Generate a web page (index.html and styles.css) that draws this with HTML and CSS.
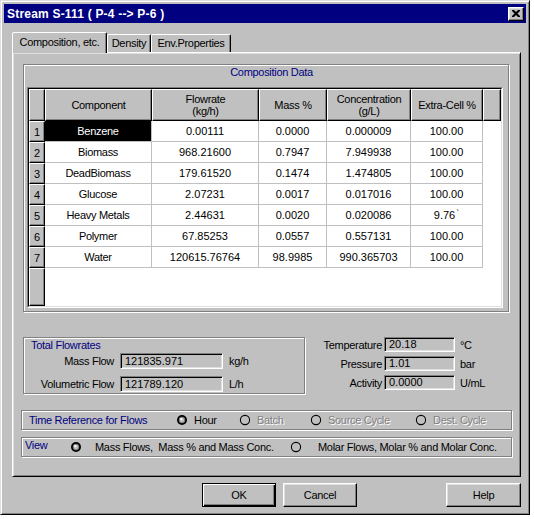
FILE: index.html
```html
<!DOCTYPE html>
<html>
<head>
<meta charset="utf-8">
<link rel="stylesheet" href="styles.css">
</head>
<body>
<div class="window">
  <div class="titlebar">
    <span class="title">Stream S-111 ( P-4 --&gt; P-6 )</span>
    <span class="close"><svg width="8" height="7" viewBox="0 0 8 7"><path d="M0 0h2l2 2 2-2h2v1l-2.5 2.5L8 6v1H6L4 5 2 7H0V6l2.5-2.5L0 1z" fill="#000"/></svg></span>
  </div>
  <div class="dlg">
    <div class="tabs">
      <div class="tab active">Composition, etc.</div>
      <div class="tab t-density">Density</div>
      <div class="tab t-env">Env.Properties</div>
    </div>
    <div class="panel">
      <div class="group comp">
        <div class="comp-title">Composition Data</div>
        <div class="grid-outer">
          <div class="grid">
            <div class="hc"></div>
            <div class="hc">Component</div>
            <div class="hc">Flowrate<br>(kg/h)</div>
            <div class="hc">Mass %</div>
            <div class="hc">Concentration<br>(g/L)</div>
            <div class="hc">Extra-Cell %</div>
            <div class="hc"></div>

            <div class="rh">1</div><div class="dc sel">Benzene</div><div class="dc">0.00111</div><div class="dc">0.0000</div><div class="dc">0.000009</div><div class="dc">100.00</div><div class="bl"></div>
            <div class="rh">2</div><div class="dc">Biomass</div><div class="dc">968.21600</div><div class="dc">0.7947</div><div class="dc">7.949938</div><div class="dc">100.00</div><div class="bl"></div>
            <div class="rh">3</div><div class="dc">DeadBiomass</div><div class="dc">179.61520</div><div class="dc">0.1474</div><div class="dc">1.474805</div><div class="dc">100.00</div><div class="bl"></div>
            <div class="rh">4</div><div class="dc">Glucose</div><div class="dc">2.07231</div><div class="dc">0.0017</div><div class="dc">0.017016</div><div class="dc">100.00</div><div class="bl"></div>
            <div class="rh">5</div><div class="dc">Heavy Metals</div><div class="dc">2.44631</div><div class="dc">0.0020</div><div class="dc">0.020086</div><div class="dc">9.76<span class="tick">`</span></div><div class="bl"></div>
            <div class="rh">6</div><div class="dc">Polymer</div><div class="dc">67.85253</div><div class="dc">0.0557</div><div class="dc">0.557131</div><div class="dc">100.00</div><div class="bl"></div>
            <div class="rh">7</div><div class="dc">Water</div><div class="dc">120615.76764</div><div class="dc">98.9985</div><div class="dc">990.365703</div><div class="dc">100.00</div><div class="bl"></div>
            <div class="rh"></div><div class="bl span6"></div>
          </div>
        </div>
      </div>

      <div class="mid">
        <div class="group totals">
          <div class="tot-title">Total Flowrates</div>
          <div class="tot-grid">
            <span class="lbl">Mass Flow</span><div class="field">121835.971</div><span>kg/h</span>
            <span class="lbl">Volumetric Flow</span><div class="field">121789.120</div><span>L/h</span>
          </div>
        </div>
        <div class="props">
          <span class="lbl">Temperature</span><div class="field">20.18</div><span>°C</span>
          <span class="lbl">Pressure</span><div class="field">1.01</div><span>bar</span>
          <span class="lbl">Activity</span><div class="field">0.0000</div><span>U/mL</span>
        </div>
      </div>

      <div class="group timeref">
        <span class="gl">Time Reference for Flows</span>
        <span class="ri"><svg class="radio" viewBox="0 0 12 12"><circle cx="6" cy="6" r="5" fill="#000"/><circle cx="6" cy="6" r="3.2" fill="#808080"/><circle cx="6" cy="6" r="2.2" fill="#c0c0c0"/><circle cx="5.2" cy="5.2" r="1.1" fill="#fff"/></svg><span>Hour</span></span>
        <span class="ri"><svg class="radio" viewBox="0 0 12 12"><circle cx="6" cy="6" r="4.6" fill="none" stroke="#000" stroke-width="1.1"/></svg><span class="dis">Batch</span></span>
        <span class="ri"><svg class="radio" viewBox="0 0 12 12"><circle cx="6" cy="6" r="4.6" fill="none" stroke="#000" stroke-width="1.1"/></svg><span class="dis">Source Cycle</span></span>
        <span class="ri"><svg class="radio" viewBox="0 0 12 12"><circle cx="6" cy="6" r="4.6" fill="none" stroke="#000" stroke-width="1.1"/></svg><span class="dis">Dest. Cycle</span></span>
      </div>

      <div class="group view">
        <span class="gl">View</span>
        <span class="ri wide"><svg class="radio" viewBox="0 0 12 12"><circle cx="6" cy="6" r="5" fill="#000"/><circle cx="6" cy="6" r="3.2" fill="#808080"/><circle cx="6" cy="6" r="2.2" fill="#c0c0c0"/><circle cx="5.2" cy="5.2" r="1.1" fill="#fff"/></svg><span class="pre">Mass Flows,  Mass % and Mass Conc.</span></span>
        <span class="ri wider"><svg class="radio" viewBox="0 0 12 12"><circle cx="6" cy="6" r="4.6" fill="none" stroke="#000" stroke-width="1.1"/></svg><span>Molar Flows, Molar % and Molar Conc.</span></span>
      </div>
    </div>

    <div class="buttons">
      <div class="btn default"><span>OK</span></div>
      <div class="btn cancel">Cancel</div>
      <div class="btn help">Help</div>
    </div>
  </div>
</div>
</body>
</html>
```
FILE: styles.css
```css
* { box-sizing: border-box; }

body {
  margin: 0;
  background: #fff;
  font-family: "Liberation Sans", Arial, sans-serif;
  font-size: 11px;
  letter-spacing: -0.3px;
  color: #000;
}

.window {
  width: 530px;
  height: 515px;
  background: #c0c0c0;
  border: 1px solid;
  border-color: #dfdfdf #000 #000 #dfdfdf;
  box-shadow: inset 1px 1px #fff, inset -1px -1px #808080;
  padding: 3px;
}

.titlebar {
  height: 19px;
  background: #000080;
  color: #fff;
  display: flex;
  align-items: center;
  justify-content: space-between;
  padding: 0 2px 0 3px;
}

.title {
  font-weight: bold;
  font-size: 12px;
  letter-spacing: 0.2px;
}

.close {
  width: 16px;
  height: 14px;
  background: #c0c0c0;
  border: 1px solid;
  border-color: #fff #000 #000 #fff;
  box-shadow: inset -1px -1px #808080, inset 1px 1px #dfdfdf;
  display: flex;
  align-items: center;
  justify-content: center;
}

.dlg {
  padding: 9px 5px 0 8px;
}

.tabs {
  display: flex;
  align-items: flex-end;
  height: 20px;
}

.tab {
  height: 18px;
  border: 1px solid;
  border-bottom: none;
  border-color: #fff #000 transparent #fff;
  box-shadow: inset -1px 0 #808080;
  border-radius: 2px 2px 0 0;
  line-height: 17px;
  text-align: center;
  background: #c0c0c0;
}

.tab.active {
  width: 95px;
  height: 21px;
  margin-bottom: -1px;
  position: relative;
  z-index: 1;
  line-height: 18px;
}

.t-density { width: 44px; }
.t-env { width: 80px; }

.panel {
  height: 425px;
  border: 1px solid;
  border-color: #fff #000 #000 #fff;
  box-shadow: inset 1px 1px #dfdfdf, inset -1px -1px #808080;
  padding: 11px 0 0 10px;
}

.group {
  border: 1px solid #808080;
  box-shadow: inset 1px 1px #fff, 1px 1px #fff;
}

.comp {
  width: 486px;
  height: 248px;
  padding-left: 3px;
}

.comp-title {
  height: 14px;
  line-height: 14px;
  color: #000080;
  text-align: center;
  padding-left: 8px;
}

.grid-outer {
  margin-top: 8px;
  width: 476px;
  height: 221px;
  border: 1px solid;
  border-color: #808080 #fff #fff #808080;
}

.grid {
  height: 100%;
  border: 1px solid;
  border-color: #000 #dfdfdf #dfdfdf #000;
  background: #fff;
  display: grid;
  grid-template-columns: 16px 107px 107px 68px 84px 72px 18px;
  grid-template-rows: 32px repeat(7, 21px) 38px;
}

.hc, .rh {
  background: #c0c0c0;
  border: 1px solid;
  border-color: #fff #000 #000 #fff;
  box-shadow: inset -1px -1px #808080;
  display: flex;
  align-items: center;
  justify-content: center;
  text-align: center;
  line-height: 12px;
}

.rh { letter-spacing: 0; }

.dc {
  border-right: 1px solid #c0c0c0;
  border-bottom: 1px solid #c0c0c0;
  display: flex;
  align-items: center;
  justify-content: center;
  letter-spacing: 0;
}

.sel {
  background: #000;
  color: #fff;
  letter-spacing: -0.3px;
}

.dc:nth-child(7n+2) { letter-spacing: -0.3px; }

.tick {
  font-size: 9px;
  margin-left: 1px;
  align-self: flex-start;
  margin-top: 3px;
}

.span6 { grid-column: span 6; }

.mid {
  display: flex;
  margin-top: 25px;
}

.totals {
  width: 282px;
  height: 57px;
  padding-top: 1px;
}

.tot-title {
  color: #000080;
  line-height: 13px;
  padding-left: 7px;
}

.tot-grid {
  display: grid;
  grid-template-columns: 90px 103px auto;
  column-gap: 6px;
  row-gap: 7px;
  grid-auto-rows: 16px;
  margin-top: 1px;
  align-items: center;
}

.lbl { text-align: right; }

.field {
  height: 100%;
  background: #c0c0c0;
  border: 1px solid;
  border-color: #808080 #fff #fff #808080;
  box-shadow: inset 1px 1px #000, inset -1px -1px #dfdfdf;
  padding-left: 4px;
  line-height: 14px;
  letter-spacing: 0;
}

.props {
  display: grid;
  grid-template-columns: 77px 71px auto;
  column-gap: 2px;
  row-gap: 4px;
  grid-auto-rows: 15px;
  align-items: center;
}

.props .field { line-height: 13px; }
.props span:not(.lbl) { padding-left: 3px; }

.timeref, .view {
  margin-left: -2px;
  width: 491px;
  height: 20px;
  display: grid;
  align-items: center;
}

.timeref {
  margin-top: 16px;
  grid-template-columns: 154px 63px 71px 105px auto;
}

.view {
  margin-top: 7px;
  grid-template-columns: 48px 220px auto;
}

.gl {
  color: #000080;
  padding-left: 7px;
}

.view .gl {
  padding-left: 3px;
  align-self: start;
  padding-top: 1px;
}

.ri {
  display: flex;
  align-items: center;
  gap: 6px;
}

.ri.wide { gap: 13px; }
.ri.wider { gap: 16px; }

.radio {
  width: 12px;
  height: 12px;
  flex: none;
}

.dis {
  color: #808080;
  text-shadow: 1px 1px 0 #fff;
}

.pre { white-space: pre; }

.buttons {
  display: flex;
  justify-content: flex-end;
  margin-top: 6px;
}

.btn {
  width: 74px;
  height: 24px;
  border: 1px solid;
  border-color: #fff #000 #000 #fff;
  box-shadow: inset -1px -1px #808080, inset 1px 1px #dfdfdf;
  display: flex;
  align-items: center;
  justify-content: center;
}

.btn.default {
  border: 1px solid #000;
  box-shadow: inset 1px 1px #fff, inset -1px -1px #000, inset -2px -2px #808080;
  margin-right: 7px;
}

.cancel { margin-right: 89px; }
.help { width: 75px; }
```
